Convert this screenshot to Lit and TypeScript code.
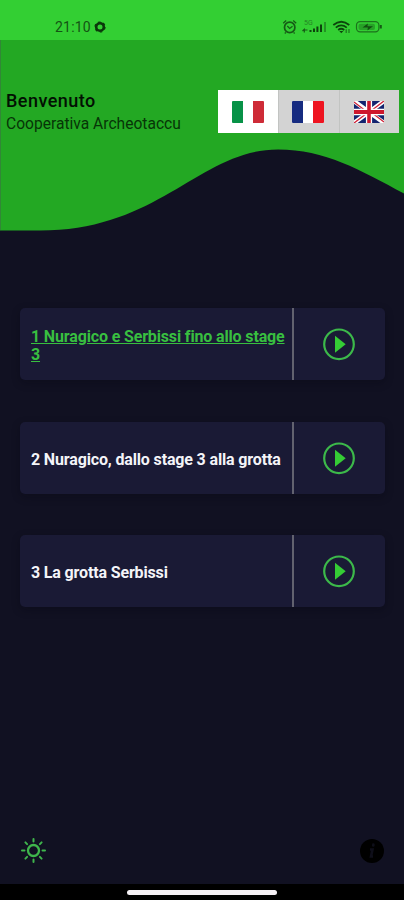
import { LitElement, html, css, svg } from "lit";
import { customElement, property } from "lit/decorators.js";

@customElement("status-bar")
class StatusBar extends LitElement {
  static styles = css`
    :host { display: flex; height: 40px; box-sizing: border-box; padding: 14px 21px 0 55px; background: #33cf33; color: #145414; justify-content: space-between; align-items: center; }
    .left, .right { display: flex; align-items: center; height: 26px; }
    .time { font-size: 14px; letter-spacing: 0.2px; width: 39px; white-space: nowrap; }
    svg { display: block; }
  `;
  render() {
    return html`
      <div class="left">
        <span class="time">21:10</span>
        <svg width="12" height="12" viewBox="0 0 12 12"><circle cx="6" cy="6" r="3.8" fill="none" stroke="#0b370b" stroke-width="2.6"/><circle cx="6" cy="6" r="5" fill="none" stroke="#0b370b" stroke-width="1.2" stroke-dasharray="2.6 2.64"/></svg>
      </div>
      <div class="right">
        <svg width="101" height="18" viewBox="282 18 101 18" fill="none" stroke="#165a16">
          <circle cx="289.7" cy="27.4" r="5.2" stroke-width="1.7"/>
          <path d="M283.2 23.2l3-2.6M296.2 23.2l-3-2.6M285.8 32.3l-1 1.2M293.6 32.3l1 1.2" stroke-width="1.3"/>
          <path d="M287.3 26l2.4 2.4 2.8-2.2" stroke-width="1.2"/>
          <text x="304" y="25.2" font-size="7" fill="#248424" stroke="none">5G</text>
          <path d="M302.5 31l1.8-1.6v3M304.500 30h3" stroke-width="1.2"/>
          <path d="M310.5 32v-2M314 32v-3.4M317.4 32v-5.4M321 32v-7.4" stroke="#0d430d" stroke-width="2"/>
          <path d="M325 32v-10" stroke="#249324" stroke-width="2"/>
          <path d="M333.3 25q8-6.6 16 0M335.8 27.6q5.4-4.4 11 0M338.2 30q3-2.4 6 0" stroke="#0c450c" stroke-width="1.8"/>
          <path d="M339.3 31h4l-2 2.3z" fill="#0c450c" stroke="none"/>
          <path d="M346.2 33v-3.8M349 29v4" stroke="#1c751c" stroke-width="1.2"/>
          <rect x="356.5" y="21.7" width="22.4" height="10.2" rx="3.6" stroke="#1c721c" stroke-width="1.2"/>
          <path d="M380.8 25v3.5" stroke-width="2"/>
          <rect x="358.5" y="23.7" width="16.5" height="6.2" rx="2" fill="#27a127" stroke="none"/>
          <path d="M362.5 27.6l5.4-4-.5 2.700h5.600l-5.600 4.100.5-2.800z" fill="#105010" stroke="none"/>
        </svg>
      </div>`;
  }
}

const flags: Record<string, unknown> = {
  it: svg`<path fill="#fff" d="M0 0h32v22H0z"/><path fill="#079247" d="M1 0h10v22H1q-1 0-1-1V1q0-1 1-1z"/><path fill="#ce2b37" d="M21 0h10q1 0 1 1v20q0 1-1 1H21z"/>`,
  fr: svg`<path fill="#fff" d="M0 0h32v22H0z"/><path fill="#162b80" d="M1 0h10v22H1q-1 0-1-1V1q0-1 1-1z"/><path fill="#ee1420" d="M21 0h10q1 0 1 1v20q0 1-1 1H21z"/>`,
  gb: svg`<path fill="#13246f" d="M0 0h32v22H0z"/><path stroke="#fff" stroke-width="4.4" d="M0 0l32 22M32 0L0 22"/><path stroke="#d02036" stroke-width="1.4" d="M0 1l14 10M32 21L18 11M32 0L18 10M0 22l14-10"/><path stroke="#fff" stroke-width="6.6" d="M16 0v22M0 11h32"/><path stroke="#ce172d" stroke-width="3.8" d="M16 0v22M0 11h32"/>`,
};

@customElement("welcome-header")
class WelcomeHeader extends LitElement {
  static styles = css`
    :host { display: grid; height: 192px; background: #111122; }
    .wave, .content { grid-area: 1 / 1; }
    .wave { display: block; }
    .content { display: flex; justify-content: space-between; align-items: flex-start; padding: 49px 5px 0 6px; z-index: 1; }
    .title { font-size: 18px; line-height: 24px; font-weight: 500; color: #021002; letter-spacing: 0.45px; }
    .sub { font-size: 15.6px; line-height: 22px; color: #073507; white-space: nowrap; }
    .flags { display: flex; margin-top: 1px; width: 181px; height: 43px; background: #d3d3d3; }
    .flag { flex: 1; display: flex; align-items: center; justify-content: center; border-left: 1px solid #c2c4c2; }
    .flag.on { background: #fff; border-color: #fff; }
    .flag svg { display: block; margin-right: 1px; }
  `;
  render() {
    return html`
      <svg class="wave" width="404" height="192" viewBox="0 40 404 192">
        <path fill="#23a823" d="M0 40H404V193.500C360 170 325 149.500 278 149.500C200 149.500 160 230.500 40 230.500H0Z"/>
        <path stroke="#328737" d="M.5 40V230"/>
      </svg>
      <div class="content">
        <div><div class="title">Benvenuto</div><div class="sub">Cooperativa Archeotaccu</div></div>
        <div class="flags">
          ${Object.keys(flags).map((k, i) => html`<div class="flag ${i === 0 ? "on" : ""}"><svg width=${k === "gb" ? 30 : 32} height="22" viewBox="0 0 32 22" preserveAspectRatio="none">${flags[k]}</svg></div>`)}
        </div>
      </div>`;
  }
}

@customElement("track-card")
class TrackCard extends LitElement {
  @property() label = "";
  @property({ type: Boolean }) active = false;
  static styles = css`
    :host { display: flex; height: 72px; background: #1a1a35; border-radius: 5px; box-shadow: 0 3px 8px rgba(5, 8, 16, 0.3); }
    .label { width: 272px; box-sizing: border-box; padding: 4px 4px 0 11px; display: flex; align-items: center; font-weight: 700; font-size: 16px; line-height: 18px; color: #f4f4f8; letter-spacing: -0.15px; }
    .active { color: #38bf40; text-decoration: underline; }
    .play { flex: 1; border-left: 2px solid #62626f; display: flex; align-items: center; justify-content: center; padding-right: 2px; }
  `;
  render() {
    return html`
      <div class="label ${this.active ? "active" : ""}">${this.label}</div>
      <div class="play"><svg width="34" height="34" viewBox="0 0 34 34"><circle cx="17" cy="17.300" r="14.800" fill="none" stroke="#3cb94a" stroke-width="2.200"/><path fill="#35cc35" d="M13 8.700L23.700 17.300L13 25.700Z"/></svg></div>`;
  }
}

@customElement("app-root")
class AppRoot extends LitElement {
  static styles = css`
    :host { display: flex; flex-direction: column; height: 900px; width: 404px; background: #111122; font-family: Roboto, sans-serif; overflow: hidden; }
    .list { display: flex; flex-direction: column; gap: 41.500px; padding: 76px 19px 0 20px; flex: 1; }
    .tools { display: flex; justify-content: space-between; align-items: center; padding: 0 19px 20px 20px; }
    .tools svg { display: block; }
    .home { height: 16px; background: #000; display: flex; justify-content: center; align-items: center; }
    .pill { width: 150px; height: 5px; border-radius: 3px; background: #f6f2f6; }
  `;
  render() {
    return html`
      <status-bar></status-bar>
      <welcome-header></welcome-header>
      <div class="list">
        <track-card active label="1 Nuragico e Serbissi fino allo stage 3"></track-card>
        <track-card label="2 Nuragico, dallo stage 3 alla grotta"></track-card>
        <track-card label="3 La grotta Serbissi"></track-card>
      </div>
      <div class="tools">
        <svg width="27" height="27" viewBox="0 0 27 27" fill="none" stroke="#3fb54c" stroke-width="2" stroke-linecap="round">
          <circle cx="13.500" cy="13.500" r="5.500" stroke-width="2.300"/>
          <path d="M13.500 2v2.500M13.500 22.500V25M2 13.500h2.500M22.500 13.500H25M5.400 5.400l1.700 1.700M19.900 19.900l1.700 1.700M5.400 21.600l1.700-1.700M19.900 7.100l1.700-1.700"/>
        </svg>
        <svg width="26" height="26" viewBox="0 0 26 26"><circle cx="13" cy="13" r="12" fill="#000"/><g fill="none" stroke="#0e0e19" stroke-width="2.600"><path d="M14.300 6.500v1" stroke-linecap="round"/><path d="M11 11.500h2.500l-1.500 7h2"/></g></svg>
      </div>
      <div class="home"><div class="pill"></div></div>`;
  }
}
